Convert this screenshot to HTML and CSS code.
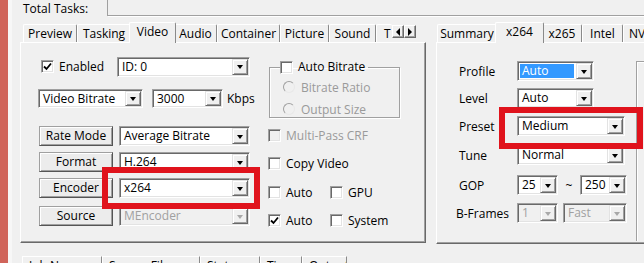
FILE: index.html
```html
<!DOCTYPE html>
<html>
<head>
<meta charset="utf-8">
<link rel="stylesheet" href="styles.css">
</head>
<body>
<div class="app">
  <div class="edge"></div>
  <div class="main">
    <div class="topbar">
      <span class="total-label">Total Tasks:</span>
      <div class="total-box"></div>
    </div>
    <div class="columns">
      <div class="tabview left-view">
        <div class="tabstrip left-strip">
          <div class="tab t-preview">Preview</div>
          <div class="tab t-tasking">Tasking</div>
          <div class="tab active t-video">Video</div>
          <div class="tab t-audio">Audio</div>
          <div class="tab t-container">Container</div>
          <div class="tab t-picture">Picture</div>
          <div class="tab t-sound">Sound</div>
          <div class="tab clipped">T</div>
          <div class="scroller">
            <div class="sbtn"><span class="tri-left"></span></div>
            <div class="sbtn"><span class="tri-right"></span></div>
          </div>
        </div>
        <div class="page left-page">
          <div class="lp-main">
            <div class="row row1">
              <label class="check enabled"><span class="cb checked"><svg viewBox="0 0 9 9" width="9" height="9"><path d="M1 4.5 L3.5 7 L8 1.5" fill="none" stroke="#000" stroke-width="1.8"/></svg></span><span>Enabled</span></label>
              <div class="combo w-id"><span class="val">ID: 0</span><span class="arrow"></span></div>
            </div>
            <div class="row row2">
              <div class="combo w-vb"><span class="val">Video Bitrate</span><span class="arrow"></span></div>
              <div class="combo w-3000"><span class="val">3000</span><span class="arrow"></span></div>
              <span class="unit">Kbps</span>
            </div>
            <div class="row row3">
              <div class="btn">Rate Mode</div>
              <div class="combo w-main"><span class="val">Average Bitrate</span><span class="arrow"></span></div>
            </div>
            <div class="row row4">
              <div class="btn">Format</div>
              <div class="combo w-main"><span class="val">H.264</span><span class="arrow"></span></div>
            </div>
            <div class="row row5">
              <div class="btn">Encoder</div>
              <div class="combo w-main"><span class="val">x264</span><span class="arrow"></span></div>
            </div>
            <div class="row row6">
              <div class="btn">Source</div>
              <div class="combo w-main disabled"><span class="val">MEncoder</span><span class="arrow"></span></div>
            </div>
          </div>
          <div class="lp-side">
            <fieldset class="group">
              <legend class="legend"><span class="cb"></span><span>Auto Bitrate</span></legend>
              <div class="radio-row r-first"><span class="radio"></span><span class="dim">Bitrate Ratio</span></div>
              <div class="radio-row"><span class="radio"></span><span class="dim">Output Size</span></div>
            </fieldset>
            <div class="crow c1"><label class="check"><span class="cb off"></span><span class="dim">Multi-Pass CRF</span></label></div>
            <div class="crow c2"><label class="check"><span class="cb"></span><span>Copy Video</span></label></div>
            <div class="crow c3">
              <label class="check pair"><span class="cb"></span><span>Auto</span></label>
              <label class="check"><span class="cb"></span><span>GPU</span></label>
            </div>
            <div class="crow c4">
              <label class="check pair"><span class="cb checked"><svg viewBox="0 0 9 9" width="9" height="9"><path d="M1 4.5 L3.5 7 L8 1.5" fill="none" stroke="#000" stroke-width="1.8"/></svg></span><span>Auto</span></label>
              <label class="check"><span class="cb"></span><span>System</span></label>
            </div>
          </div>
        </div>
      </div>
      <div class="tabview right-view">
        <div class="tabstrip right-strip">
          <div class="tab t-summary">Summary</div>
          <div class="tab active t-x264">x264</div>
          <div class="tab t-x265">x265</div>
          <div class="tab t-intel">Intel</div>
          <div class="tab last">NV</div>
        </div>
        <div class="page right-page">
          <div class="rp-form">
            <div class="frow f1"><span class="flabel">Profile</span><div class="combo w-prof"><span class="val sel">Auto</span><span class="arrow"></span></div></div>
            <div class="frow f2"><span class="flabel">Level</span><div class="combo w-prof"><span class="val">Auto</span><span class="arrow"></span></div></div>
            <div class="frow f3"><span class="flabel">Preset</span><div class="combo w-wide"><span class="val">Medium</span><span class="arrow"></span></div></div>
            <div class="frow f4"><span class="flabel">Tune</span><div class="combo w-wide"><span class="val">Normal</span><span class="arrow"></span></div></div>
            <div class="frow f5"><span class="flabel">GOP</span><div class="combo w-gop"><span class="val">25</span><span class="arrow"></span></div><span class="tilde">~</span><div class="combo w-gop2"><span class="val">250</span><span class="arrow"></span></div></div>
            <div class="frow f6"><span class="flabel bf">B-Frames</span><div class="combo w-gop disabled"><span class="val">1</span><span class="arrow"></span></div><div class="combo w-fast disabled"><span class="val">Fast</span><span class="arrow"></span></div></div>
          </div>
          <div class="rp-box"></div>
        </div>
      </div>
    </div>
    <div class="bottom-tabs">
      <div class="btab b1">Job Name</div>
      <div class="btab b2">Source File</div>
      <div class="btab b3">Status</div>
      <div class="btab b4">Time</div>
      <div class="btab b5">Output</div>
    </div>
  </div>
</div>
<div class="mark mark-encoder"></div>
<div class="mark mark-preset"></div>
</body>
</html>
```
FILE: styles.css
```css
* { box-sizing: border-box; }
html, body {
  margin: 0;
  padding: 0;
  width: 644px;
  height: 263px;
  overflow: hidden;
  background: #f0f0f0;
  font-family: "Open Sans", "Noto Sans", sans-serif;
  font-size: 12px;
  color: #000;
}
body { position: relative; }
.app { display: flex; height: 263px; }
.edge {
  width: 12px;
  flex: none;
  background: #d0645a;
  border-right: 4px solid #f7f7f7;
}
.main { flex: 1; display: flex; flex-direction: column; min-width: 0; }

.topbar { display: flex; height: 16px; }
.total-label { width: 95px; padding-left: 11px; line-height: 17px; }
.total-box {
  flex: 1;
  height: 16px;
  border-left: 1px solid #a0a0a0;
  border-bottom: 1px solid #a0a0a0;
  box-shadow: 1px 1px 0 #fff;
}

.columns { display: flex; margin-top: 6px; }
.tabview { display: flex; flex-direction: column; }
.left-view { margin-left: 8px; width: 406px; }
.right-view { margin-left: 10px; width: 230px; flex: none; }

.tabstrip { display: flex; align-items: flex-end; height: 20px; position: relative; z-index: 2; }
.left-strip { padding-left: 3px; }
.right-strip { padding-left: 1px; }
.tab {
  height: 18px;
  padding: 0;
  text-align: center;
  line-height: 17px;
  border-top: 1px solid #fff;
  border-left: 1px solid #fff;
  border-right: 1px solid #8a8a8a;
  border-radius: 2px 2px 0 0;
  white-space: nowrap;
  background: #f0f0f0;
  flex: none;
}
.tab.active {
  height: 21px;
  margin: 0 -2px -1px -2px;
  line-height: 17px;
  position: relative;
  z-index: 3;
}
.t-preview { width: 54px; }
.t-tasking { width: 54px; }
.t-video { width: 47px; }
.t-audio { width: 43px; }
.t-container { width: 63px; }
.t-picture { width: 49px; }
.t-sound { width: 47px; }
.t-summary { width: 60px; }
.t-x264 { width: 49px; }
.t-x265 { width: 40px; }
.t-intel { width: 41px; }
.tab.clipped { width: 16px; padding: 0 0 0 7px; text-align: left; border-right: none; }
.tab.last { border-right: none; padding: 0 10px 0 5px; }
.scroller { display: flex; margin-bottom: 4px; margin-left: auto; margin-right: 10px; }
.sbtn {
  width: 12px;
  height: 13px;
  display: flex;
  align-items: center;
  justify-content: center;
  border: 1px solid;
  border-color: #fff #696969 #696969 #fff;
  box-shadow: inset -1px -1px #a0a0a0;
  background: #f0f0f0;
}
.tri-left, .tri-right { width: 0; height: 0; border-top: 4px solid transparent; border-bottom: 4px solid transparent; }
.tri-left { border-right: 4px solid #000; }
.tri-right { border-left: 4px solid #000; }

.page {
  border: 1px solid;
  border-color: #fff #696969 #696969 #fff;
  box-shadow: inset -1px -1px #a0a0a0;
  display: flex;
}
.left-page { height: 201px; }
.right-page { height: 202px; width: 240px; border-right: none; }

.lp-main { width: 247px; padding-left: 17px; flex: none; }
.row { display: flex; align-items: center; height: 20px; }
.row1 { margin-top: 13px; height: 21px; }
.row2 { margin-top: 12px; height: 19px; }
.row3 { margin-top: 18px; }
.row4 { margin-top: 6px; }
.row5 { margin-top: 6px; }
.row6 { margin-top: 8px; }

.check { display: flex; align-items: center; white-space: nowrap; }
.check .cb { margin-right: 5px; }
.enabled { width: 79px; padding-left: 3px; flex: none; }

.cb {
  width: 13px;
  height: 13px;
  flex: none;
  display: flex;
  align-items: center;
  justify-content: center;
  border: 1px solid;
  border-color: #a0a0a0 #fff #fff #a0a0a0;
  box-shadow: inset 1px 1px #696969, inset -1px -1px #e3e3e3;
  background: #fff;
}
.cb.off { background: #f0f0f0; }
.cb svg { display: block; }

.combo {
  display: flex;
  height: 20px;
  flex: none;
  padding: 1px;
  border: 1px solid;
  border-color: #a0a0a0 #fff #fff #a0a0a0;
  box-shadow: inset 1px 1px #696969, inset -1px -1px #e3e3e3;
  background: #fff;
}
.row2 .combo { height: 19px; }
.combo .val {
  flex: 1;
  min-width: 0;
  padding-left: 3px;
  line-height: 16px;
  white-space: nowrap;
}
.combo .val.sel { background: #3399ff; color: #fff; margin: 1px 2px 1px 1px; line-height: 14px; padding-left: 2px; }
.combo .arrow {
  width: 16px;
  flex: none;
  display: flex;
  align-items: center;
  justify-content: center;
  border: 1px solid;
  border-color: #e3e3e3 #696969 #696969 #e3e3e3;
  box-shadow: inset 1px 1px #fff, inset -1px -1px #a0a0a0;
  background: #f0f0f0;
}
.combo .arrow::after {
  content: "";
  width: 0;
  height: 0;
  margin-top: 1px;
  border-left: 3.5px solid transparent;
  border-right: 3.5px solid transparent;
  border-top: 4px solid #000;
}
.combo.disabled { background: #f0f0f0; }
.combo.disabled .val { color: #a0a0a0; }
.combo.disabled .arrow::after { border-top-color: #a8a8a8; }

.w-id { width: 133px; }
.w-vb { width: 105px; }
.w-3000 { width: 71px; margin-left: 9px; }
.unit { margin-left: 4px; }
.w-main { width: 131px; margin-left: 6px; }

.btn {
  width: 74px;
  height: 20px;
  margin-left: 1px;
  flex: none;
  text-align: center;
  line-height: 18px;
  border: 1px solid;
  border-color: #a0a0a0 #555 #555 #a0a0a0;
  box-shadow: inset 1px 1px #fff, inset -1px -1px #a0a0a0;
  background: #ececec;
}

.lp-side { flex: 1; }
.group {
  margin: 16px 0 0 1px;
  padding: 0;
  width: 131px;
  height: 59px;
  border: 1px solid #a0a0a0;
  box-shadow: inset 1px 1px #fff, 1px 1px #fff;
  min-width: 0;
}
.legend {
  display: flex;
  align-items: center;
  padding: 0 3px 0 0;
  margin-left: 10px;
  line-height: 16px;
}
.legend .cb { margin-right: 5px; }
.radio-row { display: flex; align-items: center; height: 16px; margin-left: 13px; }
.r-first { margin-top: 4px; }
.radio-row + .radio-row { margin-top: 6px; }
.radio {
  width: 12px;
  height: 12px;
  border-radius: 50%;
  border: 1px solid;
  border-color: #a0a0a0 #e8e8e8 #e8e8e8 #a0a0a0;
  margin-right: 6px;
  flex: none;
}
.dim { color: #9a9a9a; }

.crow { display: flex; align-items: center; height: 13px; }
.c1 { margin-top: 11px; }
.c2 { margin-top: 15px; }
.c3 { margin-top: 16px; }
.c4 { margin-top: 15px; }
.pair { width: 62px; }

.rp-form { width: 200px; padding-left: 22px; flex: none; }
.frow { display: flex; align-items: center; height: 20px; }
.f1 { margin-top: 18px; }
.f2 { margin-top: 7px; }
.f3 { margin-top: 8px; }
.f4 { margin-top: 9px; }
.f5 { margin-top: 10px; }
.f6 { margin-top: 8px; }
.flabel { width: 58px; flex: none; }
.flabel.bf { margin-left: -3px; width: 61px; }
.w-prof { width: 77px; }
.w-wide { width: 108px; }
.w-gop { width: 41px; }
.w-gop2 { width: 47px; }
.w-fast { width: 64px; margin-left: 5px; }
.tilde { width: 22px; text-align: center; flex: none; }
.rp-box {
  margin: 18px 0 0 -1px;
  width: 20px;
  height: 180px;
  border-top: 1px solid #a0a0a0;
  border-left: 1px solid #a0a0a0;
  box-shadow: inset 1px 1px #fff;
}

.bottom-tabs { display: flex; margin: 12px 0 0 10px; height: 12px; align-items: flex-start; }
.btab {
  height: 14px;
  padding: 1px 0 0 6px;
  line-height: 16px;
  border-top: 1px solid #fff;
  border-left: 1px solid #fff;
  border-right: 1px solid #8a8a8a;
  white-space: nowrap;
  overflow: hidden;
  flex: none;
}
.b1 { width: 80px; }
.b2 { width: 98px; }
.b3 { width: 60px; }
.b4 { width: 42px; }
.b5 { width: 45px; }

.mark {
  position: absolute;
  border: 6px solid #e0131c;
}
.mark-encoder { left: 102px; top: 167px; width: 158px; height: 42px; }
.mark-preset { left: 499px; top: 107px; width: 144px; height: 42px; }
```
